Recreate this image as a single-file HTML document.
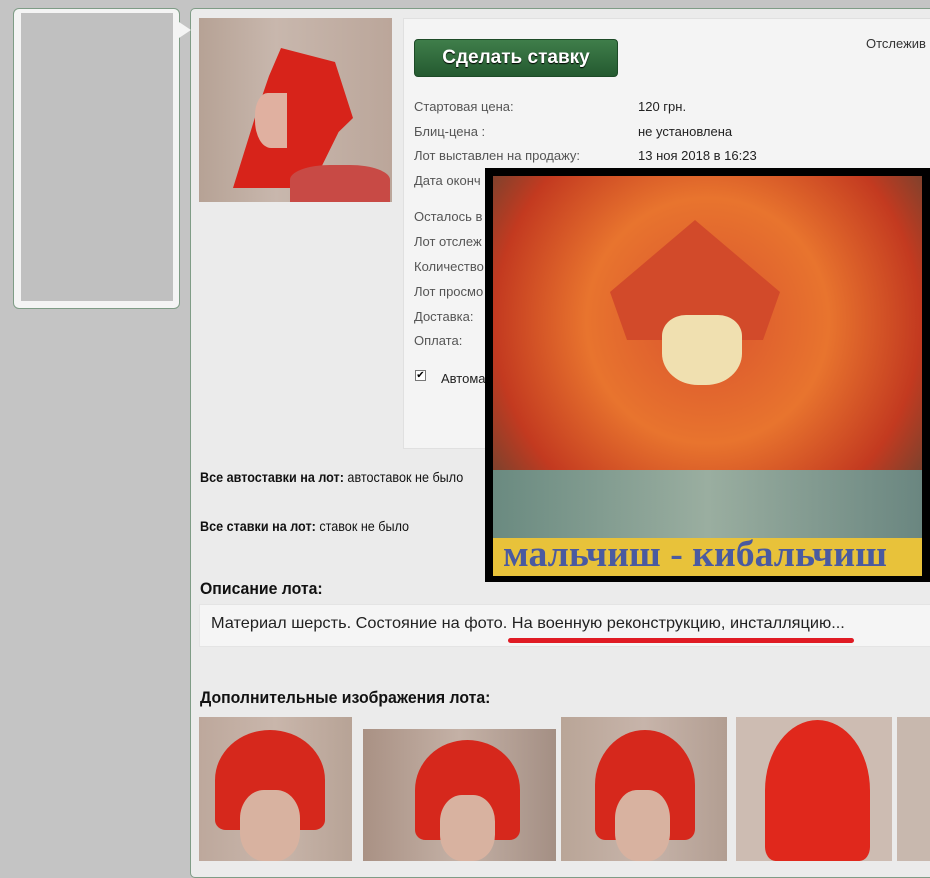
<!DOCTYPE html>
<html><head><meta charset="utf-8"><style>
*{margin:0;padding:0;box-sizing:border-box}
body{width:930px;height:861px;overflow:hidden;background:#c4c4c4;font-family:"Liberation Sans","DejaVu Sans",sans-serif;position:relative}
.abs{position:absolute}
.lcard{left:13px;top:8px;width:167px;height:301px;background:#f4f4f4;border:1px solid #7f9c86;border-radius:6px}
.lcard .in{position:absolute;left:7px;top:4px;width:152px;height:288px;background:#c0c0c0}
.main{left:190px;top:8px;width:760px;height:870px;background:#ebebeb;border:1px solid #7f9c86;border-radius:5px}
.box{left:403px;top:18px;width:540px;height:431px;background:#f4f4f4;border:1px solid #e0e0e0}
.btn{left:414px;top:39px;width:204px;height:38px;border:1px solid #1d4a27;border-radius:4px;background:linear-gradient(#3f7e4a,#245a30);color:#fff;font-weight:bold;font-size:19px;text-align:center;line-height:36px;text-shadow:0 1px 1px #000}
.lab{font-size:13px;color:#555}
.val{font-size:13px;color:#222}
.b{font-size:14px;color:#111;transform:scaleX(.9);transform-origin:left;white-space:nowrap}
.h{font-size:17px;font-weight:bold;color:#111;transform:scaleX(.93);transform-origin:left;white-space:nowrap}
.desc{left:199px;top:604px;width:740px;height:43px;background:#f5f5f5;border:1px solid #e4e4e4}
</style></head><body>
<div class="abs lcard"><div class="in"></div></div>
<div class="abs main"></div>
<div class="abs" style="left:179px;top:22px;width:12px;height:16px;background:#f4f4f4;clip-path:polygon(0 0,100% 50%,0 100%)"></div>
<div class="abs" style="left:199px;top:18px;width:193px;height:184px;background:linear-gradient(90deg,#b6a295,#c8b7ad 40%,#bba69a)"></div>
<div class="abs" style="left:233px;top:48px;width:120px;height:140px;background:#d7231a;clip-path:polygon(40% 0,85% 10%,100% 50%,88% 60%,65% 100%,0 100%,20% 45%,30% 20%)"></div>
<div class="abs" style="left:255px;top:93px;width:32px;height:55px;background:#e0b0a0;border-radius:40% 0 0 50%"></div>
<div class="abs" style="left:290px;top:165px;width:100px;height:37px;background:#c84a45;border-radius:40% 40% 0 0"></div>
<div class="abs box"></div>
<div class="abs btn">Сделать ставку</div>
<div class="abs val" style="left:866px;top:36px;color:#333">Отслежив</div>
<div class="abs lab" style="left:414px;top:99px">Стартовая цена:</div>
<div class="abs val" style="left:638px;top:99px">120 грн.</div>
<div class="abs lab" style="left:414px;top:124px">Блиц-цена :</div>
<div class="abs val" style="left:638px;top:124px">не установлена</div>
<div class="abs lab" style="left:414px;top:148px">Лот выставлен на продажу:</div>
<div class="abs val" style="left:638px;top:148px">13 ноя 2018 в 16:23</div>
<div class="abs lab" style="left:414px;top:173px">Дата оконч</div>
<div class="abs lab" style="left:414px;top:209px">Осталось в</div>
<div class="abs lab" style="left:414px;top:234px">Лот отслеж</div>
<div class="abs lab" style="left:414px;top:259px">Количество</div>
<div class="abs lab" style="left:414px;top:284px">Лот просмо</div>
<div class="abs lab" style="left:414px;top:309px">Доставка:</div>
<div class="abs lab" style="left:414px;top:333px">Оплата:</div>
<div class="abs" style="left:415px;top:370px;width:11px;height:11px;border:1px solid #777;background:#fff;font-size:10px;line-height:9px;text-align:center">✔</div>
<div class="abs val" style="left:441px;top:371px">Автома</div>
<div class="abs b" style="left:200px;top:469px"><b>Все автоставки на лот:</b> автоставок не было</div>
<div class="abs b" style="left:200px;top:518px"><b>Все ставки на лот:</b> ставок не было</div>
<div class="abs h" style="left:200px;top:579px">Описание лота:</div>
<div class="abs desc"></div>
<div class="abs" style="left:211px;top:615px;font-size:16px;color:#222;white-space:nowrap;transform:scaleX(1.02);transform-origin:left">Материал шерсть. Состояние на фото. На военную реконструкцию, инсталляцию...</div>
<div class="abs" style="left:508px;top:638px;width:346px;height:5px;background:#e01b24;border-radius:3px"></div>
<div class="abs h" style="left:200px;top:688px">Дополнительные изображения лота:</div>
<div class="abs" style="left:199px;top:717px;width:153px;height:144px;background:linear-gradient(90deg,#bda89c,#c9b6ab 50%,#b7a396)"></div>
<div class="abs" style="left:363px;top:729px;width:193px;height:132px;background:linear-gradient(90deg,#a99184,#c4b1a6 50%,#a48f84)"></div>
<div class="abs" style="left:561px;top:717px;width:166px;height:144px;background:linear-gradient(90deg,#b9a597,#c7b4aa 50%,#b29e92)"></div>
<div class="abs" style="left:736px;top:717px;width:156px;height:144px;background:#cdbcb2"></div>
<div class="abs" style="left:897px;top:717px;width:33px;height:144px;background:#c8b8ae"></div>
<div class="abs" style="left:215px;top:730px;width:110px;height:100px;background:#d6281c;border-radius:50% 50% 10% 10%"></div>
<div class="abs" style="left:415px;top:740px;width:105px;height:100px;background:#d6281c;border-radius:50% 50% 10% 10%"></div>
<div class="abs" style="left:595px;top:730px;width:100px;height:110px;background:#d6281c;border-radius:50% 50% 10% 10%"></div>
<div class="abs" style="left:765px;top:720px;width:105px;height:141px;background:#e0281c;border-radius:50% 50% 10% 10%"></div>
<div class="abs" style="left:240px;top:790px;width:60px;height:71px;background:#d8b2a0;border-radius:40%"></div>
<div class="abs" style="left:440px;top:795px;width:55px;height:66px;background:#d8b2a0;border-radius:40%"></div>
<div class="abs" style="left:615px;top:790px;width:55px;height:71px;background:#d8b2a0;border-radius:40%"></div>
<div class="abs" style="left:485px;top:168px;width:450px;height:414px;background:#000"></div>
<div class="abs" style="left:493px;top:176px;width:429px;height:362px;background:radial-gradient(ellipse at 50% 40%,#d9532e,#e8742e 40%,#c33a20 70%,#3e4838 100%)"></div>
<div class="abs" style="left:610px;top:220px;width:170px;height:120px;background:#d24a2a;clip-path:polygon(50% 0,100% 60%,90% 100%,10% 100%,0 60%)"></div>
<div class="abs" style="left:662px;top:315px;width:80px;height:70px;background:#f0e0b0;border-radius:30% 30% 45% 45%"></div>
<div class="abs" style="left:493px;top:470px;width:429px;height:68px;background:linear-gradient(90deg,#6a8a80,#9aaea0 50%,#6a8680)"></div>
<div class="abs" style="left:493px;top:538px;width:429px;height:38px;background:#e8c23a"></div>
<div class="abs" style="left:503px;top:533px;font-family:'Liberation Serif',serif;font-weight:bold;font-size:37px;color:#4a5aa0;white-space:nowrap;transform:scaleX(1.02);transform-origin:left">мальчиш - кибальчиш</div>
</body></html>
